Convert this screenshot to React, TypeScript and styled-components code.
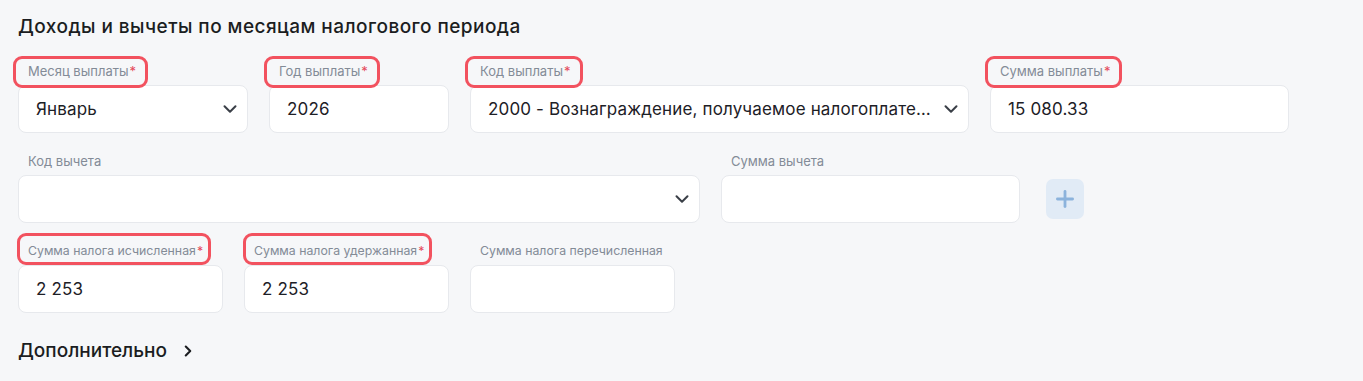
import styled, { createGlobalStyle } from 'styled-components'
import { ChevronDown, ChevronRight, Plus } from 'lucide-react'

const GlobalStyle = createGlobalStyle`
  html, body {
    margin: 0;
    padding: 0;
    background: #f6f7f9;
    font-family: Inter, "Noto Sans", sans-serif;
  }
`

const Section = styled.div`
  padding: 15px 18px 20px;
  display: flex;
  flex-direction: column;
  gap: 20px;
`

const Title = styled.h2`
  margin: 0 0 4px;
  font-size: 19px;
  line-height: 24px;
  letter-spacing: 0.45px;
  font-weight: 500;
  color: #1b1d21;
`

const Row = styled.div`
  display: flex;
  gap: 21px;
  align-items: flex-end;
`

const Field = styled.div<{ $w: number }>`
  width: ${(p) => p.$w}px;
  display: flex;
  flex-direction: column;
  gap: 6px;
  flex-shrink: 0;
`

// красная рамка вокруг обязательных подписей — накладывается поверх
const Label = styled.span<{ $marked?: boolean; $compact?: boolean }>`
  position: relative;
  align-self: flex-start;
  padding-left: 10px;
  font-size: ${(p) => (p.$compact ? '12.3px' : '13px')};
  line-height: 16px;
  color: #838b97;
  white-space: nowrap;

  &::before {
    content: '';
    display: ${(p) => (p.$marked ? 'block' : 'none')};
    position: absolute;
    top: ${(p) => (p.$compact ? '-10px' : '-7px')};
    bottom: ${(p) => (p.$compact ? '-6px' : '-9px')};
    left: ${(p) => (p.$compact ? '-1px' : '-5px')};
    right: ${(p) => (p.$compact ? '-8px' : '-12px')};
    border: 3px solid #f2525f;
    border-radius: 9px;
    pointer-events: none;
  }
`

const Star = styled.span`
  color: #e5485a;
  margin-left: 1px;
`

const Box = styled.div`
  height: 48px;
  box-sizing: border-box;
  background: #fff;
  border: 1px solid #e7e9ed;
  border-radius: 8px;
  display: flex;
  align-items: center;
  padding: 0 6px 0 17px;
  font-size: 17px;
  letter-spacing: 0.15px;
  color: #1d2026;
  gap: 4px;
`

const Value = styled.span`
  flex: 1;
  min-width: 0;
  white-space: nowrap;
  overflow: hidden;
  text-overflow: ellipsis;
`

const AddButton = styled.button`
  width: 38px;
  height: 40px;
  margin: 0 0 4px 5px;
  border: none;
  border-radius: 7px;
  background: #e1ebf6;
  color: #8cb3dc;
  display: flex;
  align-items: center;
  justify-content: center;
  padding: 0;
`

const More = styled.div`
  margin-top: 6px;
  display: flex;
  align-items: center;
  gap: 12px;
  font-size: 19px;
  line-height: 24px;
  font-weight: 500;
  color: #1b1d21;
`

type FieldProps = {
  label: string
  width: number
  value?: string
  required?: boolean
  select?: boolean
  compact?: boolean
}

const FormField = ({ label, width, value, required, select, compact }: FieldProps) => (
  <Field $w={width}>
    <Label $marked={required} $compact={compact}>
      {label}
      {required && <Star>*</Star>}
    </Label>
    <Box>
      <Value>{value}</Value>
      {select && <ChevronDown size={22} strokeWidth={2.2} color="#3a3f47" />}
    </Box>
  </Field>
)

export default function App() {
  return (
    <>
      <GlobalStyle />
      <Section>
        <Title>Доходы и вычеты по месяцам налогового периода</Title>
        <Row>
          <FormField label="Месяц выплаты" width={230} value="Январь" required select />
          <FormField label="Год выплаты" width={180} value="2026" required />
          <FormField
            label="Код выплаты"
            width={499}
            value="2000 - Вознаграждение, получаемое налогоплательщиком за выполнение трудовых обязанностей"
            required
            select
          />
          <FormField label="Сумма выплаты" width={299} value="15 080.33" required />
        </Row>
        <Row>
          <FormField label="Код вычета" width={682} select />
          <FormField label="Сумма вычета" width={299} />
          <AddButton aria-label="Добавить">
            <Plus size={26} strokeWidth={2.6} />
          </AddButton>
        </Row>
        <Row>
          <FormField label="Сумма налога исчисленная" width={205} value="2 253" required compact />
          <FormField label="Сумма налога удержанная" width={205} value="2 253" required compact />
          <FormField label="Сумма налога перечисленная" width={205} compact />
        </Row>
        <More>
          Дополнительно
          <ChevronRight size={18} strokeWidth={2.8} />
        </More>
      </Section>
    </>
  )
}
